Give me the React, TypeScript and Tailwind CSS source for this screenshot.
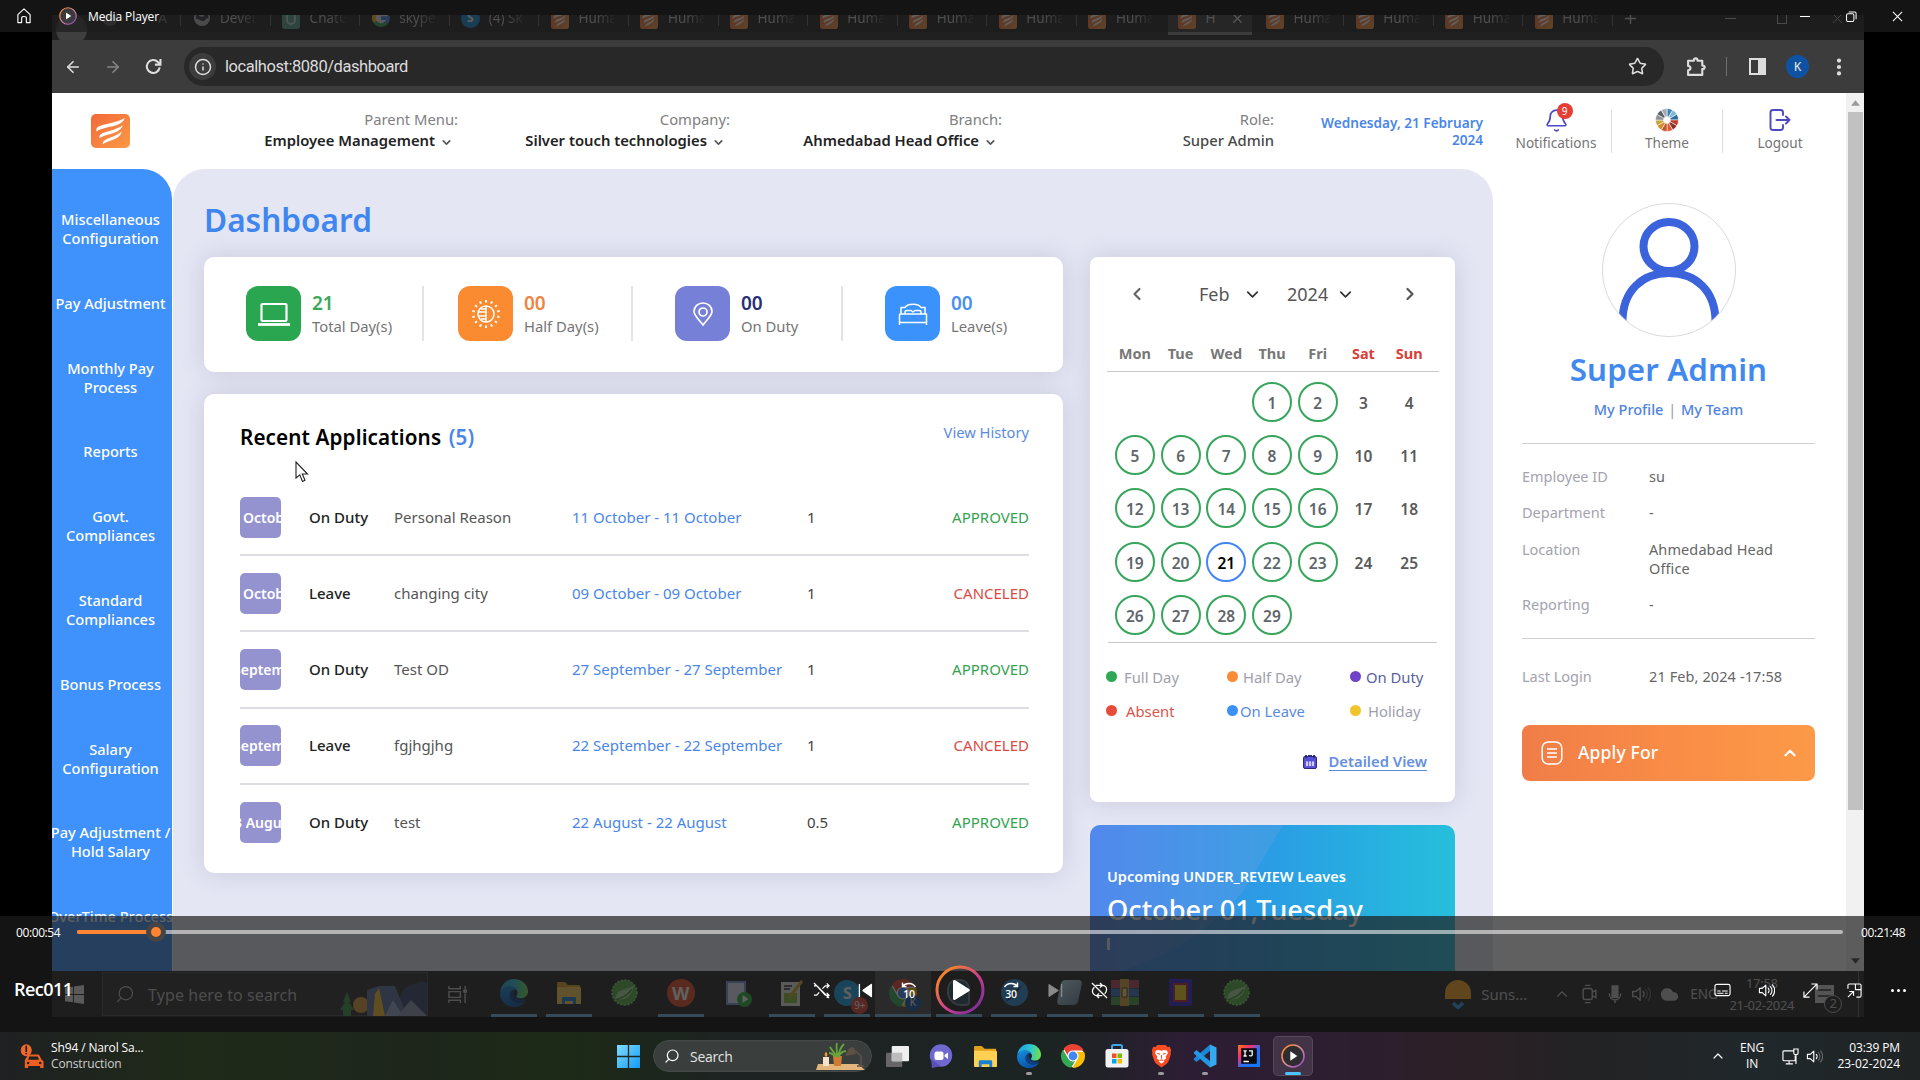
import React from "react";
import {
  ArrowLeft, ArrowRight, Bell, ChevronDown, ChevronLeft, ChevronRight, ChevronUp,
  Cloud, Info, MoreVertical, Plus, Search, Star, X,
} from "lucide-react";

type Kids = { children?: React.ReactNode };

/* ---------- small icons ---------- */

const ClaimLogo = ({ className = "" }: { className?: string }) => (
  <svg viewBox="0 0 40 36" preserveAspectRatio="none" className={className}>
    <defs>
      <linearGradient id="logoG" x1="0" y1="0" x2="1" y2="1">
        <stop offset="0" stopColor="#f2693a" />
        <stop offset="1" stopColor="#fb9a45" />
      </linearGradient>
    </defs>
    <rect width="40" height="36" rx="5" fill="url(#logoG)" />
    <g fill="#fff">
      <path d="M5.500 17C5.500 13.500 9 12.500 14 11.200C22 9.200 29 7.500 34.500 4.500C33 9.500 28 11.500 21 13.300C14 15 9 16 5.500 18.500Z" />
      <path d="M8.500 24C9.500 20.500 14 19.500 19 18C25 16.200 29 14.500 32.500 12C31 17 27 19 21 20.800C15 22.500 11.500 23.500 8.500 25.500Z" />
      <path d="M12 31C12.500 28 16 26.500 20 25C25 23 28.500 21 31.500 18.500C30.500 23.500 27 25.500 22 27.500C17.500 29.200 15 30 12 32Z" />
    </g>
  </svg>
);

const ChromeIcon = ({ className = "" }: { className?: string }) => (
  <svg viewBox="0 0 24 24" className={className}>
    <circle cx="12" cy="12" r="11" fill="#fff" />
    <path fill="#ea4335" d="M12 0C8.210 0 4.831 1.757 2.632 4.501l3.953 6.848A5.454 5.454 0 0 1 12 6.545h10.691A12 12 0 0 0 12 0z" />
    <path fill="#34a853" d="M1.931 5.470A11.943 11.943 0 0 0 0 12c0 6.012 4.420 10.991 10.189 11.864l3.953-6.847a5.450 5.450 0 0 1-6.865-2.290z" />
    <path fill="#fbbc05" d="M15.273 7.636a5.446 5.446 0 0 1 1.450 7.090l-5.344 9.258c.206.010.413.016.621.016 6.627 0 12-5.373 12-12 0-1.540-.290-3.011-.818-4.364z" />
    <circle cx="12" cy="12" r="4.400" fill="#4285f4" />
  </svg>
);

const EdgeIcon = ({ className = "" }: { className?: string }) => (
  <svg viewBox="0 0 24 24" className={className}>
    <defs>
      <linearGradient id="edgeA" x1="0" y1="0.200" x2="1" y2="0.300">
        <stop offset="0" stopColor="#1b9de2" />
        <stop offset="0.550" stopColor="#2ec5d3" />
        <stop offset="1" stopColor="#6ee04f" />
      </linearGradient>
      <linearGradient id="edgeB" x1="0" y1="0" x2="0.500" y2="1">
        <stop offset="0" stopColor="#1690dc" />
        <stop offset="1" stopColor="#0b53a8" />
      </linearGradient>
    </defs>
    <path fill="url(#edgeA)" d="M0.300 11C0.800 4.800 5.800 0 12 0C19 0 24 4.900 24 10.500C24 14.500 21 16.600 18 16.600C15.200 16.600 14 15.600 14 14.900C14 14.200 15 13.800 15 12C15 9.200 12 6.700 8.300 6.700C4.300 6.700 1.300 9 0.300 11Z" />
    <path fill="url(#edgeB)" d="M0.100 12.500C0.400 8.700 4 6.300 8 6.300C11 6.300 13.500 7.700 14.500 9.500C12 8.500 8.600 10.200 8.600 14C8.600 18.500 12.700 21 17 20.400C19.300 20.100 21 19.300 22.300 18.200C20.200 21.900 16.300 24 12.200 24C5.300 24 -0.300 18.800 0.100 12.500Z" />
    <path fill="#0a3f86" d="M8.600 14C8.600 11 10.500 9.300 12.600 9.200C10.800 11 11.500 16.500 17.500 17.800C19.700 18.200 21.500 17.600 22.800 17.100C21 19.600 18.500 20.600 16 20.600C12 20.500 8.600 18 8.600 14Z" />
  </svg>
);

const FolderIcon = ({ className = "" }: { className?: string }) => (
  <svg viewBox="0 0 26 24" className={className}>
    <path fill="#e0a01c" d="M1 2.500C1 1.500 1.700 1 2.500 1H9L12 4H24V10H1Z" />
    <path fill="#ffd052" d="M1 6H23.500C24.500 6 25 6.500 25 7.500V22C25 22.700 24.500 23 24 23H2C1.400 23 1 22.600 1 22Z" />
    <path fill="#1a80d4" d="M6 23V17.500C6 16.500 6.700 16 7.500 16H18.500C19.500 16 20 16.600 20 17.500V23H17V20H9V23Z" />
  </svg>
);

const SpringIcon = ({ className = "" }: { className?: string }) => (
  <svg viewBox="0 0 28 28" className={className}>
    <circle cx="14" cy="14" r="12" fill="#57b245" stroke="#7fdc6a" strokeWidth="1.500" strokeDasharray="2 1.500" />
    <path d="M5 20C10 22 21 21 23 7C17 12 7 9 5 20Z" fill="#a9dd9c" />
    <path d="M6 21C12 19 18 16 21 11" stroke="#3d9130" strokeWidth="1.500" fill="none" />
  </svg>
);

const WinLogo = ({ className = "", colors }: { className?: string; colors: [string, string] }) => (
  <svg viewBox="0 0 24 24" className={className}>
    <defs>
      <linearGradient id={"w" + colors[0].slice(1)} x1="0" y1="0" x2="24" y2="24" gradientUnits="userSpaceOnUse">
        <stop offset="0" stopColor={colors[0]} />
        <stop offset="1" stopColor={colors[1]} />
      </linearGradient>
    </defs>
    <path fill={`url(#w${colors[0].slice(1)})`} d="M0 0H11.300V11.300H0ZM12.700 0H24V11.300H12.700ZM0 12.700H11.300V24H0ZM12.700 12.700H24V24H12.700Z" />
  </svg>
);

const OldWinLogo = ({ className = "" }: { className?: string }) => (
  <svg viewBox="0 0 24 24" className={className}>
    <path fill="#ececec" d="M0 3.500L10 2.100V11.500H0ZM11.200 1.900L24 0V11.500H11.200ZM0 12.500H10V21.900L0 20.500ZM11.200 12.500H24V24L11.200 22.100Z" />
  </svg>
);

const PlayBadge = ({ className = "", id, dark }: { className?: string; id: string; dark?: boolean }) => (
  <svg viewBox="0 0 24 24" className={className}>
    <defs>
      <linearGradient id={id} x1="0" y1="0" x2="1" y2="1">
        <stop offset="0.150" stopColor="#f58a3c" />
        <stop offset="0.500" stopColor="#e08aa0" />
        <stop offset="0.900" stopColor="#9a4fc4" />
      </linearGradient>
    </defs>
    <circle cx="12" cy="12" r="11" fill={dark ? "#2d2d30" : "#3a3a3d"} stroke={`url(#${id})`} strokeWidth="1.600" />
    <path d="M9.300 7.300L16.300 12L9.300 16.700Z" fill="#fff" />
  </svg>
);

const SpeakerIcon = ({ className = "", dim = "0.400" }: { className?: string; dim?: string }) => (
  <svg viewBox="0 0 24 24" fill="none" stroke="currentColor" strokeWidth="1.600" strokeLinejoin="round" strokeLinecap="round" className={className}>
    <path d="M2 9H6L11 4.500V19.500L6 15H2Z" />
    <path d="M14.500 9C16 10.500 16 13.500 14.500 15" />
    <path d="M17.500 6.500C20.500 9.500 20.500 14.500 17.500 17.500" opacity={dim} />
    <path d="M20.500 4C24.500 8.500 24.500 15.500 20.500 20" opacity={dim} />
  </svg>
);

const Center = ({ className = "", children }: Kids & { className?: string }) => (
  <div className={"flex shrink-0 items-center justify-center " + className}>{children}</div>
);

/* ---------- recorded browser ---------- */

const TabSep = () => <div className="h-4 w-px shrink-0 bg-[#6a6a6a]" />;

const TabLabel = ({ children }: Kids) => (
  <span className="ml-[9px] w-9 overflow-hidden whitespace-nowrap bg-gradient-to-r from-[#c4c4c4] from-50% to-[#3a3a3a] bg-clip-text text-[13.500px] text-transparent">{children}</span>
);

const TabItem = ({ label, icon }: { label: string; icon: React.ReactNode }) => (
  <div className="flex w-[89.600px] shrink-0 items-center">
    <TabSep />
    <div className="ml-[11px] flex size-[19px] items-center justify-center">{icon}</div>
    <TabLabel>{label}</TabLabel>
  </div>
);

const Huma = () => <TabItem label="Huma" icon={<ClaimLogo className="h-[21px] w-[18px]" />} />;

const TabStrip = () => (
  <div className="h-[25px] w-full overflow-hidden bg-[#202020]">
    <div className="-mt-[14px] flex h-[34px] items-center">
      <div className="flex w-[128px] shrink-0 items-center">
        <div className="ml-1 mt-[22px] size-[31px] rounded-full bg-[#3f3f3f]" />
        <div className="ml-[15px] size-4 rounded-full bg-[#555]" />
        <span className="ml-[40px] text-sm text-[#777]">A</span>
      </div>
      <TabItem label="Devel" icon={<svg viewBox="0 0 16 16" className="size-4"><circle cx="8" cy="8" r="8" fill="#b4b6ba" /><path d="M2 5C5 4 6 8 9 6.500C11 5.500 9 3 14 4L14.500 8C11 8 12 11 9 11C6 11 6 9 2 9Z" fill="#33353a" /></svg>} />
      <TabItem label="ChatG" icon={<div className="h-[21px] w-[18px] rounded-[3px] bg-[#5ba08c] p-1"><div className="size-full rounded-full border-2 border-[#b9ddd2]" /></div>} />
      <TabItem label="skype" icon={
        <svg viewBox="0 0 24 24" className="size-[18px]"><circle cx="12" cy="12" r="10" fill="#e9e9e9" /><g fill="none" strokeWidth="5"><path stroke="#ea4335" d="M4 7A9.500 9.500 0 0 1 19 5.500" /><path stroke="#fbbc05" d="M4 17A9.500 9.500 0 0 1 4 7" /><path stroke="#34a853" d="M19 18.500A9.500 9.500 0 0 1 4 17" /><path stroke="#4285f4" d="M12 12H21.500A9.500 9.500 0 0 1 19 18.500" /></g></svg>
      } />
      <TabItem label="(4) Sk" icon={<div className="flex size-[19px] items-center justify-center rounded-full bg-[#1289d8] text-xs font-bold text-white">S</div>} />
      <Huma /><Huma /><Huma /><Huma /><Huma /><Huma /><Huma />
      <div className="ml-[2px] flex h-full w-[84px] shrink-0 items-center bg-[#3c3c3c]">
        <ClaimLogo className="ml-[10px] h-[21px] w-[18px]" />
        <span className="ml-[10px] text-[13.500px] text-[#c9c9c9]">H</span>
        <X className="ml-[14px] size-[15px] text-[#dedede]" />
      </div>
      <div className="ml-[2px] flex w-[89.600px] shrink-0 items-center">
        <div className="ml-[12px] flex size-[19px] items-center justify-center"><ClaimLogo className="h-[21px] w-[18px]" /></div>
        <TabLabel>Huma</TabLabel>
      </div>
      <Huma /><Huma /><Huma />
      <TabSep />
      <Plus className="ml-[9px] size-[17px] shrink-0 text-[#c9c9c9]" />
      <div className="ml-auto flex items-center text-[#b5b5b5]">
        <div className="h-px w-[11px] bg-current" />
        <div className="ml-[41px] h-3 w-[10px] border border-current" />
        <X className="ml-[42px] mr-[18px] size-[17px]" strokeWidth={1.400} />
      </div>
    </div>
  </div>
);

const Toolbar = () => (
  <div className="flex h-[53px] items-center bg-[#3c3c3c] text-[#dedede]">
    <ArrowLeft className="ml-[12px] size-[18px]" strokeWidth={2.200} />
    <ArrowRight className="ml-[22px] size-[18px] text-[#858585]" strokeWidth={2.200} />
    <svg viewBox="0 0 20 20" fill="none" stroke="currentColor" strokeWidth="2.200" className="ml-[22px] size-[19px]">
      <path d="M16.500 11A6.800 6.800 0 1 1 14.600 5.200L17 7.500" /><path d="M17.300 2V8H11.500" />
    </svg>
    <div className="ml-[21px] flex h-[39px] w-[1480px] items-center rounded-full bg-[#282828]">
      <Center className="ml-[5px] size-[27px] rounded-full bg-[#3c3c3c]"><Info className="size-[18px]" /></Center>
      <span className="ml-[9px] mt-px font-[Roboto,sans-serif] text-[16.500px] tracking-[-0.450px] text-[#dcdcdc]">localhost:8080/dashboard</span>
      <Star className="ml-auto mr-[17px] size-[19px]" />
    </div>
    <svg viewBox="0 0 20 20" fill="none" stroke="currentColor" strokeWidth="2" strokeLinejoin="round" className="ml-[22px] size-[21px]">
      <path d="M2 4.500H7.500C7.500 1.500 11 1.500 11 4.500H15.500V9C18.500 9 18.500 12.500 15.500 12.500V18H2V13.500C5 13.500 5 9.500 2 9.500Z" />
    </svg>
    <div className="ml-[19px] h-[19px] w-px bg-[#6f6f6f]" />
    <div className="ml-[22px] flex h-[17px] w-[17px] border-2 border-current"><div className="ml-auto h-full w-[6px] bg-current" /></div>
    <Center className="ml-[20px] size-[23px] rounded-full bg-[#0f52a3] text-xs font-medium">K</Center>
    <MoreVertical className="ml-[19px] size-[22px] fill-current" strokeWidth={2.600} />
  </div>
);

const HeaderPick = ({ width, label, value, plain }: { width: string; label: string; value: string; plain?: boolean }) => (
  <div className={"-mt-[2px] flex shrink-0 flex-col items-end whitespace-nowrap text-[14.800px] leading-[21px] " + width}>
    <span className="text-[#808080]">{label}</span>
    {plain ? (
      <span className="font-medium text-[#484848]">{value}</span>
    ) : (
      <span className="flex items-center font-semibold text-[#222]">
        {value}<ChevronDown className="ml-[5px] mr-[5px] mt-1 size-[13px] text-[#555]" strokeWidth={3} />
      </span>
    )}
  </div>
);

const HeaderAction = ({ width, label, children }: Kids & { width: string; label: string }) => (
  <div className={"-mt-[3px] flex h-[43px] shrink-0 flex-col items-center justify-end text-[13.600px] leading-[17px] text-[#757575] " + width}>
    {children}
    <span>{label}</span>
  </div>
);

const wheel = ["#3f86b8", "#7ab6dd", "#2f6a9c", "#c0392b", "#8c2f26", "#e05a3a", "#c2552b", "#d58a2a", "#c4a43c", "#8e8f93", "#5b6167", "#a3adb5"];

const AppHeader = () => (
  <div className="flex h-[76px] items-center bg-white">
    <ClaimLogo className="ml-[39px] h-[34px] w-[39px] shrink-0" />
    <HeaderPick width="w-[328px]" label="Parent Menu:" value="Employee Management" />
    <HeaderPick width="w-[272px]" label="Company:" value="Silver touch technologies" />
    <HeaderPick width="w-[272px]" label="Branch:" value="Ahmedabad Head Office" />
    <HeaderPick width="w-[272px]" label="Role:" value="Super Admin" plain />
    <div className="w-[209px] shrink-0 text-right text-[13.600px] font-semibold leading-[17px] text-[#4a86e8]">
      Wednesday, 21 February<br />2024
    </div>
    <HeaderAction width="ml-[26px] w-[94px]" label="Notifications">
      <div className="relative mb-px">
        <Bell className="size-[25px] text-[#4d49c4]" strokeWidth={1.600} />
        <div className="absolute -top-[5px] left-[13px] flex size-[16px] items-center justify-center rounded-full bg-[#e53e35] text-[10px] leading-none text-white">9</div>
      </div>
    </HeaderAction>
    <div className="ml-[8px] h-[43px] w-px shrink-0 bg-[#dcdcdc]" />
    <HeaderAction width="ml-[20px] w-[70px]" label="Theme">
      <svg viewBox="-12 -12 24 24" className="mb-[2px] size-[24px]">
        {wheel.map((c, i) => (
          <path key={i} fill={c} stroke="#fff" strokeWidth="0.500" transform={`rotate(${i * 30})`} d="M0 -3.500L0 -11.500A11.500 11.500 0 0 1 5.750 -9.960L1.750 -3.030Z" />
        ))}
      </svg>
    </HeaderAction>
    <div className="ml-[20px] h-[43px] w-px shrink-0 bg-[#dcdcdc]" />
    <HeaderAction width="ml-[22px] w-[70px]" label="Logout">
      <svg viewBox="0 0 24 24" fill="none" stroke="#4d49c4" strokeWidth="1.900" strokeLinejoin="round" strokeLinecap="round" className="mb-[2px] size-[24px]">
        <path d="M15 7V4.500C15 3 14 2 12.500 2H5C3.500 2 2.500 3 2.500 4.500V19.500C2.500 21 3.500 22 5 22H12.500C14 22 15 21 15 19.500V17" />
        <path d="M8.500 12H21.500M18 8.500L21.500 12L18 15.500" />
      </svg>
    </HeaderAction>
  </div>
);

const menu = [
  ["Miscellaneous", "Configuration"], ["Pay Adjustment"], ["Monthly Pay", "Process"], ["Reports"],
  ["Govt.", "Compliances"], ["Standard", "Compliances"], ["Bonus Process"], ["Salary", "Configuration"],
  ["Pay Adjustment /", "Hold Salary"], ["OverTime Process"],
];

const Sidebar = () => (
  <div className="flex h-full w-[120px] shrink-0 flex-col items-center gap-[45.800px] overflow-hidden rounded-tr-[30px] bg-[#3f91fb] pr-[3px] pt-[41px] text-center text-[14.600px] font-medium leading-[19px] text-white">
    {menu.map((lines) => (
      <div key={lines[0]} className="shrink-0 whitespace-nowrap">
        {lines.map((l) => <div key={l}>{l}</div>)}
      </div>
    ))}
  </div>
);

const Stat = ({ cell, tile, num, value, label, children }: Kids & { cell: string; tile: string; num: string; value: string; label: string }) => (
  <div className={"flex h-[55px] shrink-0 items-center " + cell}>
    <Center className={"size-[55px] rounded-xl text-white " + tile}>{children}</Center>
    <div className="ml-[11px] whitespace-nowrap">
      <div className={"text-[19px] font-semibold leading-[24px] " + num}>{value}</div>
      <div className="text-[14.800px] leading-[22px] text-[#757575]">{label}</div>
    </div>
  </div>
);

const apps = [
  { thumb: "October", shift: "ml-[3px]", kind: "On Duty", reason: "Personal Reason", dates: "11 October - 11 October", days: "1", status: "APPROVED" },
  { thumb: "October", shift: "ml-[3px]", kind: "Leave", reason: "changing city", dates: "09 October - 09 October", days: "1", status: "CANCELED" },
  { thumb: "September", shift: "-ml-[7px]", kind: "On Duty", reason: "Test OD", dates: "27 September - 27 September", days: "1", status: "APPROVED" },
  { thumb: "September", shift: "-ml-[7px]", kind: "Leave", reason: "fgjhgjhg", dates: "22 September - 22 September", days: "1", status: "CANCELED" },
  { thumb: "3 August", shift: "-ml-[6px]", kind: "On Duty", reason: "test", dates: "22 August - 22 August", days: "0.5", status: "APPROVED" },
];

const Applications = () => (
  <div className="mt-[22px] h-[479px] rounded-[10px] bg-white pl-[36px] pr-[34px] pt-[29px] shadow-[0_0_24px_rgba(70,70,110,0.180)]">
    <div className="flex h-[57px] items-start justify-between">
      <div className="text-[20.700px] font-semibold leading-[28px] tracking-[0.100px] text-black">
        Recent Applications <span className="ml-[2px] text-[#4a86e8]">(5)</span>
      </div>
      <span className="mt-px text-[14.700px] leading-[17px] text-[#5b8be0]">View History</span>
    </div>
    {apps.map((a, i) => (
      <div key={i} className={"flex h-[76.200px] items-center whitespace-nowrap text-[15px] " + (i < 4 ? "border-b-2 border-[#dedee2]" : "pb-px")}>
        <div className="flex h-[41px] w-[41px] shrink-0 items-center overflow-hidden rounded-[5px] bg-[#9493cf] text-[14px] font-semibold text-white"><span className={a.shift}>{a.thumb}</span></div>
        <span className="ml-[28px] w-[85px] font-medium text-[#222]">{a.kind}</span>
        <span className="w-[178px] text-[#555]">{a.reason}</span>
        <span className="w-[235px] text-[#4a86e8]">{a.dates}</span>
        <span className="text-[#444]">{a.days}</span>
        <span className={"ml-auto " + (a.status === "APPROVED" ? "text-[#33a352]" : "text-[#dc4a44]")}>{a.status}</span>
      </div>
    ))}
  </div>
);

const weekdays = ["Mon", "Tue", "Wed", "Thu", "Fri", "Sat", "Sun"];

const Day = ({ n }: { n: number }) => {
  const col = (n + 2) % 7;
  const ring = col > 4 ? "border-transparent text-[#5a5a5a]" : n === 21 ? "border-[#4285f4] text-black" : "border-[#37a55c] text-[#60656c]";
  return (
    <Center className="h-[53.400px]">
      <Center className={"size-[40px] rounded-full border-2 pt-[3px] text-[15.500px] font-semibold " + ring}>{n}</Center>
    </Center>
  );
};

const Legend = ({ dot, text, gap, label }: { dot: string; text: string; gap: string; label: string }) => (
  <div className="flex h-[34px] items-center whitespace-nowrap">
    <div className={"size-[11px] rounded-full " + dot} />
    <span className={"text-[14.800px] " + gap + " " + text}>{label}</span>
  </div>
);

const Calendar = () => (
  <div className="h-[545px] rounded-[8px] bg-white pt-[21px] shadow-[0_0_24px_rgba(70,70,110,0.180)]">
    <div className="flex h-[32px] items-center text-[18px] text-[#555]">
      <ChevronLeft className="ml-[37px] size-[20px] text-[#666]" strokeWidth={2.600} />
      <span className="ml-[52px] w-[44px]">Feb</span>
      <ChevronDown className="size-[19px] text-[#333]" strokeWidth={2.200} />
      <span className="ml-[25px] w-[49px]">2024</span>
      <ChevronDown className="size-[19px] text-[#333]" strokeWidth={2.200} />
      <ChevronRight className="ml-[45px] size-[20px] text-[#555]" strokeWidth={2.600} />
    </div>
    <div className="ml-[22px] mt-[26px] grid w-[320px] grid-cols-7 text-center text-[14.500px] font-bold leading-[34px] text-[#777]">
      {weekdays.map((d, i) => <span key={d} className={i > 4 ? "text-[#d9403a]" : ""}>{d}</span>)}
    </div>
    <div className="ml-[17px] mt-px w-[332px] border-b border-[#c8c8c8]" />
    <div className="ml-[22px] mt-[3px] grid w-[320px] grid-cols-7">
      <span /><span /><span />
      {Array.from({ length: 29 }, (_, i) => <Day key={i} n={i + 1} />)}
    </div>
    <div className="ml-[18px] w-[329px] border-b border-[#c8c8c8]" />
    <div className="ml-[16px] mt-[17px] grid grid-cols-[121px_123px_1fr]">
      <Legend dot="bg-[#2fa856]" gap="ml-[7px]" text="text-[#a0a0ac]" label="Full Day" />
      <Legend dot="bg-[#f98b33]" gap="ml-[5px]" text="text-[#a0a0ac]" label="Half Day" />
      <Legend dot="bg-[#6f42c8]" gap="ml-[5px]" text="text-[#5a5f9e]" label="On Duty" />
      <Legend dot="bg-[#e84b3c]" gap="ml-[9px]" text="text-[#d9534a]" label="Absent" />
      <Legend dot="bg-[#3d90f5]" gap="ml-[2px]" text="text-[#5b8be0]" label="On Leave" />
      <Legend dot="bg-[#eec62b]" gap="ml-[7px]" text="text-[#a0a0ac]" label="Holiday" />
    </div>
    <div className="mr-[28px] mt-[25px] flex items-center justify-end">
      <svg viewBox="0 0 14 14" className="mr-[12px] size-[14px]">
        <rect x="0.500" y="1.500" width="13" height="12" rx="1.500" fill="#5650d8" stroke="#2e2a78" />
        <path d="M3 0V3M11 0V3M5 1H9" stroke="#2e2a78" strokeWidth="2" />
        <path d="M2.500 6H11.500V11.500H2.500ZM5.500 6V11.500M8.500 6V11.500" fill="#cfcdf8" stroke="#5650d8" strokeWidth="0.800" />
      </svg>
      <span className="border-b border-[#5b8be0] text-[14.800px] font-semibold leading-[17px] text-[#6690e0]">Detailed View</span>
    </div>
  </div>
);

const Upcoming = () => (
  <div className="relative mt-[23px] h-[200px] overflow-hidden rounded-t-[10px] bg-gradient-to-r from-[#4284ee] via-[#2a9de4] to-[#26bfdb] text-white">
    <svg viewBox="0 0 365 200" className="absolute inset-0"><path d="M0 0H193L168 42Q130 115 20 150L0 158Z" fill="#c0a8e0" opacity="0.130" /></svg>
    <div className="relative pl-[17px] pt-[39px]">
      <div className="text-[14.500px] font-semibold leading-[24px]">Upcoming UNDER_REVIEW Leaves</div>
      <div className="mt-[4px] text-[27.200px] font-medium leading-[36px]">October 01,Tuesday</div>
      <div className="mt-[10px] h-3 w-[3px] bg-white/80" />
    </div>
  </div>
);

const Field = ({ label, gap, children }: Kids & { label: string; gap: string }) => (
  <div className={"flex text-[14.500px] leading-[19px] " + gap}>
    <span className="w-[127px] shrink-0 text-[#a3a3ae]">{label}</span>
    <span className="tracking-[0.100px] text-[#666]">{children}</span>
  </div>
);

const Profile = () => (
  <div className="flex w-[353px] shrink-0 flex-col bg-white pl-[29px] pr-[31px] pt-[33px]">
    <svg viewBox="0 0 136 136" className="size-[136px] self-center">
      <defs><clipPath id="avatarClip"><circle cx="68" cy="68" r="66" /></clipPath></defs>
      <circle cx="68" cy="68" r="66.500" fill="#fff" stroke="#dadada" />
      <g fill="none" stroke="#3a63dc" strokeWidth="8" clipPath="url(#avatarClip)">
        <ellipse cx="68" cy="44.500" rx="25.500" ry="24.500" />
        <path d="M21.500 120C21.500 88 42 71 68 71C94 71 114.500 88 114.500 120" />
      </g>
    </svg>
    <div className="mt-[10px] text-center text-[31.300px] font-semibold leading-[42px] tracking-[0.100px] text-[#4189ee]">Super Admin</div>
    <div className="mt-[9px] text-center text-[14.500px] font-medium leading-[20px] text-[#4f83e0]">My Profile <span className="mx-px font-normal text-[#999]">|</span> My Team</div>
    <div className="mb-[23px] mt-[24px] h-px bg-[#cfcfcf]" />
    <Field label="Employee ID" gap="">su</Field>
    <Field label="Department" gap="mt-[17px]">-</Field>
    <Field label="Location" gap="mt-[18px]">Ahmedabad Head<br />Office</Field>
    <Field label="Reporting" gap="mt-[17px]">-</Field>
    <div className="mb-[28px] mt-[24px] h-px bg-[#cfcfcf]" />
    <Field label="Last Login" gap="">21 Feb, 2024 -17:58</Field>
    <div className="mt-[39px] flex h-[56px] items-center rounded-[8px] bg-gradient-to-r from-[#f07d48] via-[#f98c46] to-[#fc9a48] text-white">
      <svg viewBox="0 0 22 24" fill="none" stroke="#fff" strokeWidth="1.500" className="ml-[19px] h-[24px] w-[22px]">
        <rect x="1.200" y="1" width="19.600" height="22" rx="6" /><path d="M6 8H16M6 12H16M6 16H16" />
      </svg>
      <span className="-mt-px ml-[15px] text-[17.500px] font-medium tracking-[0.150px]">Apply For</span>
      <ChevronUp className="ml-auto mr-[16px] size-[18px]" strokeWidth={3} />
    </div>
  </div>
);

const Dashboard = () => (
  <div className="flex h-[802px] overflow-hidden bg-white">
    <Sidebar />
    <div className="ml-px w-[1320px] shrink-0 rounded-t-[32px] bg-[#e5e6f4] pl-[31px] pr-[38px] pt-[30px]">
      <h1 className="text-[31.600px] font-semibold leading-[42px] text-[#3f87ef]">Dashboard</h1>
      <div className="mt-[16px] flex gap-[27px]">
        <div className="w-[859px]">
          <div className="flex h-[115px] rounded-[10px] bg-white pl-[42px] pt-[29px] shadow-[0_0_24px_rgba(70,70,110,0.180)]">
            <Stat cell="w-[178px] border-r-2 border-[#e4e4e4]" tile="bg-[#2ba650]" num="text-[#3aa85a]" value="21" label="Total Day(s)">
              <svg viewBox="0 0 34 26" fill="none" stroke="currentColor" strokeWidth="2.200" className="h-[26px] w-[34px]"><rect x="4.500" y="3" width="25" height="17" rx="1" /><path d="M1 23.500H33" strokeWidth="2.800" /></svg>
            </Stat>
            <Stat cell="ml-[34px] w-[175px] border-r-2 border-[#e4e4e4]" tile="bg-[#fb8b30]" num="text-[#ee8446]" value="00" label="Half Day(s)">
              <svg viewBox="0 0 30 30" fill="none" stroke="currentColor" strokeWidth="1.500" className="size-[30px]">
                <circle cx="15" cy="15" r="8" /><path d="M15 7V23M15 10H10M15 13H8M15 17H8M15 20H10" />
                <g strokeWidth="2">{Array.from({ length: 14 }, (_, i) => <path key={i} d="M15 1V3.500" transform={`rotate(${i * 25.714} 15 15)`} />)}</g>
              </svg>
            </Stat>
            <Stat cell="ml-[42px] w-[168px] border-r-2 border-[#e4e4e4]" tile="bg-[#7680d6]" num="text-[#2a2f7a]" value="00" label="On Duty">
              <svg viewBox="0 0 20 24" fill="none" stroke="currentColor" strokeWidth="1.700" strokeLinejoin="round" className="h-[24px] w-[20px]"><path d="M10 23C6 17.500 1 13.500 1 9.500A9 8.500 0 0 1 19 9.500C19 13.500 14 17.500 10 23Z" /><circle cx="10" cy="10" r="4" /></svg>
            </Stat>
            <Stat cell="ml-[42px]" tile="bg-[#3b92fb]" num="text-[#4a90ee]" value="00" label="Leave(s)">
              <svg viewBox="0 0 30 24" fill="none" stroke="currentColor" strokeWidth="1.500" strokeLinejoin="round" className="h-[24px] w-[30px]"><path d="M3 12V5.500H7C9 1 21 1 23 5.500H27V12M1.500 12H28.500V23M1.500 12V23M1.500 20.500H28.500M7 12V10C7 9 8 8.500 9 8.500H13L15 10L17 8.500H21C22 8.500 23 9 23 10V12" /></svg>
            </Stat>
          </div>
          <Applications />
        </div>
        <div className="w-[365px]"><Calendar /><Upcoming /></div>
      </div>
    </div>
    <Profile />
  </div>
);

/* ---------- recorded Windows 10 taskbar ---------- */

const BarApp = ({ on, active, children }: Kids & { on?: boolean; active?: boolean }) => (
  <div className={"flex h-full w-[55.600px] shrink-0 flex-col items-center justify-between " + (active ? "bg-[#4a4a4a]" : "")}>
    <div className="flex h-[43px] items-center justify-center">{children}</div>
    <div className={"h-[3px] " + (active ? "w-full " : "w-[46px] ") + (on ? "bg-[#70b8ea]" : "")} />
  </div>
);

const RecordedTaskbar = () => (
  <div className="flex h-[46px] items-center bg-[#232324]">
    <OldWinLogo className="ml-[13px] size-[19px] shrink-0" />
    <div className="ml-[18px] flex h-[44px] w-[326px] shrink-0 items-center border border-[#4a4a4a] bg-[#2c2c2c] text-[#bdbdbd]">
      <Search className="ml-[12px] size-[20px] -scale-x-100" strokeWidth={1.500} />
      <span className="ml-[13px] mt-[2px] whitespace-nowrap text-[16px] tracking-[0.100px]">Type here to search</span>
      <svg viewBox="0 0 88 34" className="ml-auto mt-[9px] h-[34px] w-[88px]">
        <path d="M50 34L66 6L80 0H88V34Z" fill="#37456e" />
        <circle cx="22" cy="23" r="8" fill="#e39a3b" />
        <path d="M28 34V8L40 4L56 4L68 34Z" fill="#5d6f9f" />
        <path d="M34 34L36 12L40 6L46 34Z" fill="#ffc02e" />
        <path d="M46 34L54 18L64 34Z" fill="#9aa9d0" />
        <path d="M58 34L72 18L88 34Z" fill="#8d95b5" />
        <path d="M8 10L12 20H10L15 28H12V34H4V28H1L6 20H4Z" fill="#3d8f45" />
      </svg>
    </div>
    <Center className="w-[58px]">
      <svg viewBox="0 0 20 20" fill="none" stroke="#c0c0c0" strokeWidth="1.500" className="size-[19px]"><path d="M1 1V4H13V1M1 19V16H13V19M1 7H13V13H1ZM18 1V4M18 9V19" /><circle cx="18" cy="6.500" r="1.500" fill="#c0c0c0" /></svg>
    </Center>
    <div className="flex h-full">
      <BarApp on><EdgeIcon className="size-[28px]" /></BarApp>
      <BarApp on><FolderIcon className="h-[24px] w-[26px]" /></BarApp>
      <BarApp><SpringIcon className="size-[29px]" /></BarApp>
      <BarApp on><Center className="size-[28px] rounded-full bg-[#ee4b22] text-lg font-bold text-white">W</Center></BarApp>
      <BarApp><div className="flex h-[24px] w-[20px] items-end justify-end border-2 border-[#7d94e0] bg-[#e6ebff]"><div className="-mb-1 -mr-2 flex size-[15px] shrink-0 items-center justify-center rounded-full bg-[#23b33a]"><svg viewBox="0 0 8 8" className="size-2"><path d="M1.500 0L7.500 4L1.500 8Z" fill="#fff" /></svg></div></div></BarApp>
      <BarApp on><svg viewBox="0 0 24 28" className="h-[28px] w-[24px]"><path d="M1 3H20V27H1Z" fill="#eceee4" /><path d="M4 14H17V24H4Z" fill="#7fbf3a" /><path d="M9 19L22 2" stroke="#dba62d" strokeWidth="3" /><path d="M4 7H12M4 10H10" stroke="#555" strokeWidth="2" /></svg></BarApp>
      <BarApp on><div className="relative flex size-[26px] items-center justify-center rounded-full bg-[#15a0ea] text-base font-bold text-white">S<div className="absolute -bottom-2 -right-2 flex size-[17px] items-center justify-center rounded-full bg-[#e2412f] text-[10px] font-normal">9+</div></div></BarApp>
      <BarApp on active><div className="relative"><ChromeIcon className="size-[28px]" /><div className="absolute -bottom-1 -right-1 flex size-[16px] items-center justify-center rounded-full bg-[#0f52a3] text-[10px] text-white">K</div></div></BarApp>
      <BarApp on><div className="h-[27px] w-[23px] rounded-[10px_10px_4px_14px] border-2 border-[#a8c6dc] bg-[#31648c]" /></BarApp>
      <BarApp on><Center className="size-[27px] rounded-full bg-[#2b8ad4]"><svg viewBox="0 0 20 20" className="size-5"><path d="M2 19L7 10L18 2L11 13Z" fill="#0f3760" /></svg></Center></BarApp>
      <BarApp on><div className="h-[25px] w-[21px] -skew-x-12 rounded-sm bg-gradient-to-br from-[#bfe2f2] to-[#6a8ea3]" /></BarApp>
      <BarApp on><svg viewBox="0 0 28 27" className="h-[27px] w-[28px]"><path d="M0 1H28V9H0Z" fill="#b8455c" /><path d="M0 9.500H28V17.500H0Z" fill="#3f72c4" /><path d="M0 18H28V26H0Z" fill="#4a9c48" /><path d="M9 0H18V27H9Z" fill="#d9a441" /><path d="M11 9H16V18H11Z" fill="#f0dca0" stroke="#5a4210" /></svg></BarApp>
      <BarApp on><div className="flex h-[27px] w-[23px] items-center justify-center border-4 border-[#3423d0] bg-[#b8243a]"><div className="h-[15px] w-[11px] bg-[#f4d21f]" /></div></BarApp>
      <BarApp on><SpringIcon className="size-[29px]" /></BarApp>
    </div>
    <div className="flex h-full flex-1 items-center text-[#c4c4c4]">
      <svg viewBox="0 0 28 30" className="ml-[180px] h-[30px] w-[28px] shrink-0"><path d="M1 20V14A13 13 0 0 1 27 14V20Z" fill="#fda51f" /><path d="M9 24L14 28.500L19 24" stroke="#2e9ae4" strokeWidth="3.500" fill="none" /></svg>
      <span className="ml-[9px] w-[46px] whitespace-nowrap text-[15px]">Suns...</span>
      <ChevronUp className="ml-[26px] size-[18px] shrink-0" strokeWidth={1.500} />
      <svg viewBox="0 0 16 22" fill="none" stroke="currentColor" strokeWidth="1.500" className="ml-[11px] h-[20px] w-[15px] shrink-0"><rect x="1" y="5" width="10" height="12" rx="2" /><path d="M3 1.500H9M3 20.500H9M11 9L15 7V15L11 13" /></svg>
      <svg viewBox="0 0 14 20" fill="none" stroke="currentColor" strokeWidth="1.500" className="ml-[11px] h-[19px] w-[14px] shrink-0"><rect x="4" y="1" width="6" height="12" fill="currentColor" /><path d="M1 9C1 18 13 18 13 9M7 16V19" /></svg>
      <SpeakerIcon className="ml-[9px] size-[20px] shrink-0" />
      <Cloud className="ml-[9px] size-[19px] shrink-0 fill-current" />
      <span className="ml-[11px] w-[30px] text-[13.500px]">ENG</span>
      <div className="ml-[8px] w-[67px] text-center text-[13px] leading-[22px] tracking-tight"><div>17:58</div><div className="whitespace-nowrap">21-02-2024</div></div>
      <div className="relative ml-[20px] h-[18px] w-[19px] bg-[#d5d5d5] px-[3px] pt-1"><div className="border-y-2 border-[#555] py-[2px]" /><div className="absolute left-[9px] top-[10px] flex size-[18px] items-center justify-center rounded-full border border-[#bbb] bg-[#232324] text-[13px]">2</div></div>
      <div className="ml-auto mr-[5px] h-full w-px bg-[#666]" />
    </div>
  </div>
);

/* ---------- media player chrome ---------- */

const PlayerBar = () => (
  <div className="absolute inset-x-0 bottom-0 flex h-[116px] flex-col bg-[#1c1c1c]/70 font-['Open_Sans',sans-serif] text-white">
    <div className="flex h-[32px] items-center text-[12px] tracking-[-0.400px]">
      <span className="ml-[16px] mt-[2px] w-[61px]">00:00:54</span>
      <div className="relative h-1 w-[1766px] rounded-full bg-white/55">
        <div className="h-1 w-[79px] rounded-full bg-[#ff8432]" />
        <div className="absolute -top-2 left-[69px] flex size-5 items-center justify-center rounded-full bg-[#454545]"><div className="size-[10px] rounded-full bg-[#ff8432]" /></div>
      </div>
      <span className="ml-[18px] mt-[2px]">00:21:48</span>
    </div>
    <div className="flex h-[84px] items-center">
      <span className="-mt-[2px] ml-[14px] w-[785px] text-[18px] font-semibold tracking-[-0.550px]">Rec011</span>
      <div className="flex h-full items-center">
        <Center className="w-[44px]"><svg viewBox="0 0 18 18" fill="none" stroke="#fff" strokeWidth="1.300" className="size-[17px]"><path d="M1 4H4L13 14H17M1 14H4L6.500 11M10 7L13 4H17M14.500 1.500L17 4L14.500 6.500M14.500 11.500L17 14L14.500 16.500M1 1L17 17" /></svg></Center>
        <Center className="w-[44px]"><svg viewBox="0 0 16 16" className="size-[15px]"><path d="M1.500 1V15" stroke="#fff" strokeWidth="1.400" /><path d="M15 1.500V14.500C15 15.300 14.300 15.500 13.800 15L5 8.700C4.500 8.300 4.500 7.700 5 7.300L13.800 1C14.300 0.600 15 0.800 15 1.500Z" fill="#fff" /></svg></Center>
        <Center className="w-[44px] flex-col"><svg viewBox="0 0 16 7" fill="none" stroke="#fff" strokeWidth="1.400" className="h-[7px] w-[16px]"><path d="M1.500 0.500V4.500H5.500M1.500 4.500C4.500 0.500 11.500 0.500 14.500 5" /></svg><span className="text-[10.500px] font-semibold leading-[10px] tracking-tight">10</span></Center>
        <Center className="w-[58px]">
          <svg viewBox="0 0 50 50" className="size-[50px]">
            <defs><linearGradient id="ring" x1="0" y1="0" x2="1" y2="1"><stop offset="0.150" stopColor="#f5822e" /><stop offset="0.550" stopColor="#cf3f8a" /><stop offset="0.900" stopColor="#7c2f9c" /></linearGradient></defs>
            <circle cx="25" cy="25" r="23" fill="#1c1c1c" fillOpacity="0.400" stroke="url(#ring)" strokeWidth="3" />
            <path d="M18 16.500C18 15 19.200 14.600 20.200 15.300L34 24C35 24.600 35 25.600 34 26.200L20.200 34.800C19.200 35.400 18 35 18 33.600Z" fill="#fff" />
          </svg>
        </Center>
        <Center className="w-[44px] flex-col"><svg viewBox="0 0 16 7" fill="none" stroke="#fff" strokeWidth="1.400" className="h-[7px] w-[16px] -scale-x-100"><path d="M1.500 0.500V4.500H5.500M1.500 4.500C4.500 0.500 11.500 0.500 14.500 5" /></svg><span className="text-[10.500px] font-semibold leading-[10px] tracking-tight">30</span></Center>
        <Center className="w-[44px]"><svg viewBox="0 0 16 16" className="size-[15px] -scale-x-100"><path d="M1.500 1V15" stroke="#8a8a8a" strokeWidth="1.400" /><path d="M15 1.500V14.500L5 8L15 1.500Z" fill="#8a8a8a" stroke="#8a8a8a" /></svg></Center>
        <Center className="w-[44px]"><svg viewBox="0 0 18 18" fill="none" stroke="#fff" strokeWidth="1.300" className="size-[17px]"><path d="M5 3.500H12C14.500 3.500 16.500 5.500 16.500 8C16.500 10 15.500 11.500 14.500 12.500M3.500 5.500C2.500 6.500 1.500 7.500 1.500 9.500C1.500 12 3.500 14.500 6 14.500H12M9.500 1L12 3.500L9.500 6M8.500 12L6 14.500L8.500 17M1 1L17 17" /></svg></Center>
      </div>
      <div className="ml-[579px] flex">
        <Center className="w-[44px]"><svg viewBox="0 0 18 14" fill="none" stroke="#fff" strokeWidth="1.200" className="h-[14px] w-[17px]"><rect x="1" y="1" width="16" height="12" rx="2" /><path d="M3.500 8H7M8.500 8H14.500M3.500 10.500H10M11.500 10.500H14.500" /></svg></Center>
        <Center className="w-[44px]"><SpeakerIcon dim="1" className="size-[17px]" /></Center>
        <Center className="w-[44px]"><svg viewBox="0 0 16 16" fill="none" stroke="#fff" strokeWidth="1.200" className="size-[15px]"><path d="M1 15L15 1M9 1H15V7M1 9V15H7" /></svg></Center>
        <Center className="w-[44px]"><svg viewBox="0 0 16 16" fill="none" stroke="#fff" strokeWidth="1.200" className="size-[15px]"><path d="M1 6V2.500C1 1.500 1.500 1 2.500 1H13.500C14.500 1 15 1.500 15 2.500V13.500C15 14.500 14.500 15 13.500 15H10M9 1V7H15M1 15L7 9M2.500 9H7V13.500" /></svg></Center>
        <Center className="w-[44px] gap-[3px]"><i className="size-[3px] rounded-full bg-white" /><i className="size-[3px] rounded-full bg-white" /><i className="size-[3px] rounded-full bg-white" /></Center>
      </div>
    </div>
  </div>
);

const TitleBar = () => (
  <div className="absolute inset-x-0 top-0 flex h-8 items-center bg-[#1c1c1c]/70 font-['Open_Sans',sans-serif] text-white">
    <svg viewBox="0 0 16 17" fill="none" stroke="#fff" strokeWidth="1.200" strokeLinejoin="round" className="ml-[16px] h-[16px] w-[16px]"><path d="M1.500 7L8 1L14.500 7V15.500H10.500V10.500C10.500 9.500 9.500 9 8 9C6.500 9 5.500 9.500 5.500 10.500V15.500H1.500Z" /></svg>
    <PlayBadge id="tb" className="ml-[27px] size-[18px]" />
    <span className="ml-[11px] mt-[2px] text-[12px] tracking-[-0.100px]">Media Player</span>
    <div className="ml-auto flex items-center">
      <div className="h-px w-[10px] bg-white" />
      <svg viewBox="0 0 12 12" fill="none" stroke="#fff" strokeWidth="1.100" className="ml-[36px] size-[11px]"><rect x="0.600" y="3" width="8" height="8.400" rx="1.500" /><path d="M3 1H9.500C10.500 1 11 1.500 11 2.500V9" /></svg>
      <svg viewBox="0 0 12 12" fill="none" stroke="#fff" strokeWidth="1.100" className="ml-[35px] mr-[17px] size-[11px]"><path d="M1 1L11 11M11 1L1 11" /></svg>
    </div>
  </div>
);

/* ---------- Windows 11 taskbar ---------- */

const DockItem = ({ dot, width = "w-[44px]", children }: Kids & { dot?: boolean; width?: string }) => (
  <div className={"flex h-[48px] shrink-0 flex-col items-center pt-[8px] " + width}>
    <Center className="h-[32px]">{children}</Center>
    {dot && <div className="h-[3px] w-[6px] shrink-0 rounded-full bg-[#9b9b9b]" />}
  </div>
);

const Taskbar = () => (
  <div className="flex h-[48px] items-center bg-[linear-gradient(90deg,#1f2122_0%,#1f2a19_10%,#1e261c_22%,#1d2a16_29%,#1d2322_38%,#1c2423_55%,#2d1d34_62%,#2d1e30_70%,#2d1f27_75%,#232224_82%,#20282b_92%,#1f2324_100%)] font-['Open_Sans',sans-serif] text-[12px] tracking-[-0.130px] text-white">
    <svg viewBox="0 0 24 26" className="ml-[20px] h-[25px] w-[24px]">
      <ellipse cx="6" cy="6.500" rx="5.700" ry="6.300" fill="#f0692c" /><path d="M6 2.500V7.500" stroke="#222" strokeWidth="1.800" strokeLinecap="round" /><circle cx="6" cy="10" r="1" fill="#222" />
      <path d="M4.500 17L7 12.500C7.400 11.500 8 11 9 11H18C19 11 19.500 11.500 20 12.500L22 16.500C23.500 17 24 18 24 19V25H20.500V23H8V25H4.500Z" fill="#ee5f24" />
      <path d="M9.300 13H17.800L19.300 16.500H8Z" fill="#1f2320" /><circle cx="8" cy="19.800" r="1.300" fill="#1f2320" /><circle cx="20.500" cy="19.800" r="1.300" fill="#1f2320" />
    </svg>
    <div className="ml-[7px] w-[566px] leading-[16px]"><div>Sh94 / Narol Sa...</div><div className="text-[#cfcfcf]">Construction</div></div>
    <WinLogo colors={["#7fdcff", "#149bf5"]} className="size-[23px]" />
    <div className="ml-[13px] flex h-[32px] w-[219px] shrink-0 items-center rounded-full border border-[#454a48] bg-[#3a3f3d]">
      <Search className="ml-[10px] size-[16px] -scale-x-100" strokeWidth={1.800} />
      <span className="ml-[10px] text-[14px] tracking-[-0.300px] text-[#e3e3e3]">Search</span>
      <svg viewBox="0 0 50 28" className="ml-auto mr-[5px] h-[28px] w-[50px]">
        <path d="M0 28L2 22H42L49 28Z" fill="#e2b57c" />
        <path d="M17 14H26L25 24H18Z" fill="#cf7a35" />
        <path d="M21 15C18 10 15 7 14 5M21 15C21 9 20 4 21 1M22 15C23 9 25 5 28 2M22 15C25 10 28 9 30 9M20 15C17 12 15 11 13 11" stroke="#68a53a" strokeWidth="1.800" fill="none" />
        <rect x="7" y="15" width="6" height="9" fill="#f5e5c8" /><ellipse cx="10" cy="12.500" rx="1.300" ry="2.300" fill="#ff9a26" />
        <path d="M30 14C30 9 34 5 37 5L40 12Z" fill="#5f5245" /><path d="M37 7L45 14V24M41 24H48" stroke="#5f5245" strokeWidth="1.500" fill="none" />
      </svg>
    </div>
    <div className="ml-[3px] flex">
      <DockItem><svg viewBox="0 0 24 24" className="size-[23px]"><rect x="0" y="8" width="17" height="15" rx="1" fill="#666" /><rect x="6" y="1" width="18" height="16" rx="1" fill="#efefef" /><rect x="6" y="8" width="11" height="9" fill="#bcbcbc" /></svg></DockItem>
      <DockItem><svg viewBox="0 0 24 24" className="size-[24px]"><circle cx="12" cy="11.500" r="11.200" fill="#6f68cf" /><path d="M2 15L3 24L12 22Z" fill="#5a50b8" /><rect x="5.500" y="7.500" width="9" height="8.500" rx="2" fill="#fff" /><path d="M15.500 11L19 8.500V15L15.500 12.500Z" fill="#fff" /></svg></DockItem>
      <DockItem><FolderIcon className="h-[23px] w-[25px]" /></DockItem>
      <DockItem dot><EdgeIcon className="size-[24px]" /></DockItem>
      <DockItem><ChromeIcon className="size-[24px]" /></DockItem>
      <DockItem><svg viewBox="0 0 24 24" className="size-[24px]"><path d="M7 5V2.500C7 1.500 7.500 1 8.500 1H15.500C16.500 1 17 1.500 17 2.500V5" stroke="#3aa7e8" strokeWidth="2" fill="none" /><rect x="0.500" y="5" width="23" height="18.500" rx="2.500" fill="#f2f2f2" /><path d="M7 9.500H11.500V14H7Z" fill="#f25022" /><path d="M12.500 9.500H17V14H12.500Z" fill="#7fba00" /><path d="M7 15H11.500V19.500H7Z" fill="#00a4ef" /><path d="M12.500 15H17V19.500H12.500Z" fill="#ffb900" /></svg></DockItem>
      <DockItem dot><svg viewBox="0 0 22 26" className="h-[24px] w-[21px]"><path d="M6.500 1H15.500L17.500 3.200L20 3L21.500 7L20.800 9L21.200 10.500C20 15 19 19 17 21L11 25.500L5 21C3 19 2 15 0.800 10.500L1.200 9L0.500 7L2 3L4.500 3.200Z" fill="#fb4b22" /><path d="M5 7L8 6.500L11 7.200L14 6.500L17 7L18 10L15.500 13.500L16 16L13 17.500L14 19L11 21.500L8 19L9 17.500L6 16L6.500 13.500L4 10Z" fill="#fff" /><path d="M6.500 10L9.500 11M15.500 10L12.500 11M11 12V16M9.500 17.500H12.500" stroke="#fb4b22" strokeWidth="1.200" /></svg></DockItem>
      <DockItem dot><svg viewBox="0 0 24 24" className="size-[24px]"><path d="M17 0.500L23.500 3.500V20.500L17 23.500Z" fill="#35a8f0" /><path d="M17 0.500V7L3.500 18L0.800 15.800V14.500Z" fill="#1b86d6" /><path d="M17 23.500V17L3.500 6L0.800 8.200V9.500Z" fill="#2497e3" /></svg></DockItem>
      <DockItem><svg viewBox="0 0 24 24" className="size-[22px]"><defs><linearGradient id="ij" x1="0" y1="0" x2="1" y2="1"><stop offset="0" stopColor="#f97a12" /><stop offset="0.300" stopColor="#fe2e6d" /><stop offset="0.550" stopColor="#2f6df6" /><stop offset="1" stopColor="#087cfa" /></linearGradient></defs><rect width="24" height="24" fill="url(#ij)" /><rect x="3.500" y="3.500" width="17" height="17" fill="#0b0b14" /><path d="M6 6.500H9.500M7.700 6.500V12M6 12H9.500M12 6.500H15.500V10.500C15.500 12 13.500 12.300 12 11.500M6 18H12" stroke="#fff" strokeWidth="1.400" fill="none" /></svg></DockItem>
      <div className="ml-[2px] mt-[4px] flex h-[40px] w-[40px] flex-col items-center rounded-[5px] border border-white/10 bg-white/10 pt-[7px]">
        <PlayBadge id="dk" dark className="size-[24px]" />
        <div className="mt-[4px] h-[3px] w-[16px] rounded-full bg-[#4cc2ff]" />
      </div>
    </div>
    <ChevronUp className="ml-auto size-[16px]" strokeWidth={1.800} />
    <div className="ml-[14px] w-[24px] text-center leading-[16px]"><div>ENG</div><div>IN</div></div>
    <svg viewBox="0 0 18 18" fill="none" stroke="#fff" strokeWidth="1.200" className="ml-[18px] size-[17px]"><path d="M12 3H2C1.500 3 1 3.500 1 4V12.500C1 13 1.500 13.500 2 13.500H14V8M7.500 13.500V16.500M4 16.800H11.500M12.500 1H17V5.500C17 6.500 16 7 14.800 7C13.500 7 12.500 6.500 12.500 5.500ZM14.800 7V17" /></svg>
    <SpeakerIcon className="ml-[7px] size-[17px]" dim="0.300" />
    <div className="ml-[14px] mr-[20px] flex w-[63px] flex-col items-end whitespace-nowrap leading-[16px]"><div>03:39 PM</div><div className="tracking-normal">23-02-2024</div></div>
  </div>
);

export default function App() {
  return (
    <div className="h-[1080px] w-[1920px] overflow-hidden bg-black font-['Noto_Sans',sans-serif]">
      <div className="relative h-[1032px] overflow-hidden">
        <div className="ml-[52px] mt-[15px] flex h-[1002px] w-[1812px] flex-col overflow-hidden">
          <TabStrip />
          <Toolbar />
          <div className="flex h-[878px] bg-white">
            <div className="w-[1794px]"><AppHeader /><Dashboard /></div>
            <div className="flex w-[18px] flex-col items-center bg-[#f1f1f1]">
              <svg viewBox="0 0 10 6" className="mt-[7px] h-[6px] w-[9px]"><path d="M0 6L5 0L10 6Z" fill="#9a9a9a" /></svg>
              <div className="mt-[6px] h-[698px] w-[15px] bg-[#c1c1c1]" />
              <svg viewBox="0 0 10 6" className="mb-[7px] mt-auto h-[6px] w-[9px]"><path d="M0 0L5 6L10 0Z" fill="#444" /></svg>
            </div>
          </div>
          <RecordedTaskbar />
        </div>
        <TitleBar />
        <PlayerBar />
        <svg viewBox="0 0 14 22" className="absolute left-[295px] top-[461px] h-[22px] w-[14px]"><path d="M1 1V17L4.800 13.800L7.500 20.500L10 19.300L7.300 13H12.500Z" fill="#fff" stroke="#222" strokeWidth="1.100" /></svg>
      </div>
      <Taskbar />
    </div>
  );
}
